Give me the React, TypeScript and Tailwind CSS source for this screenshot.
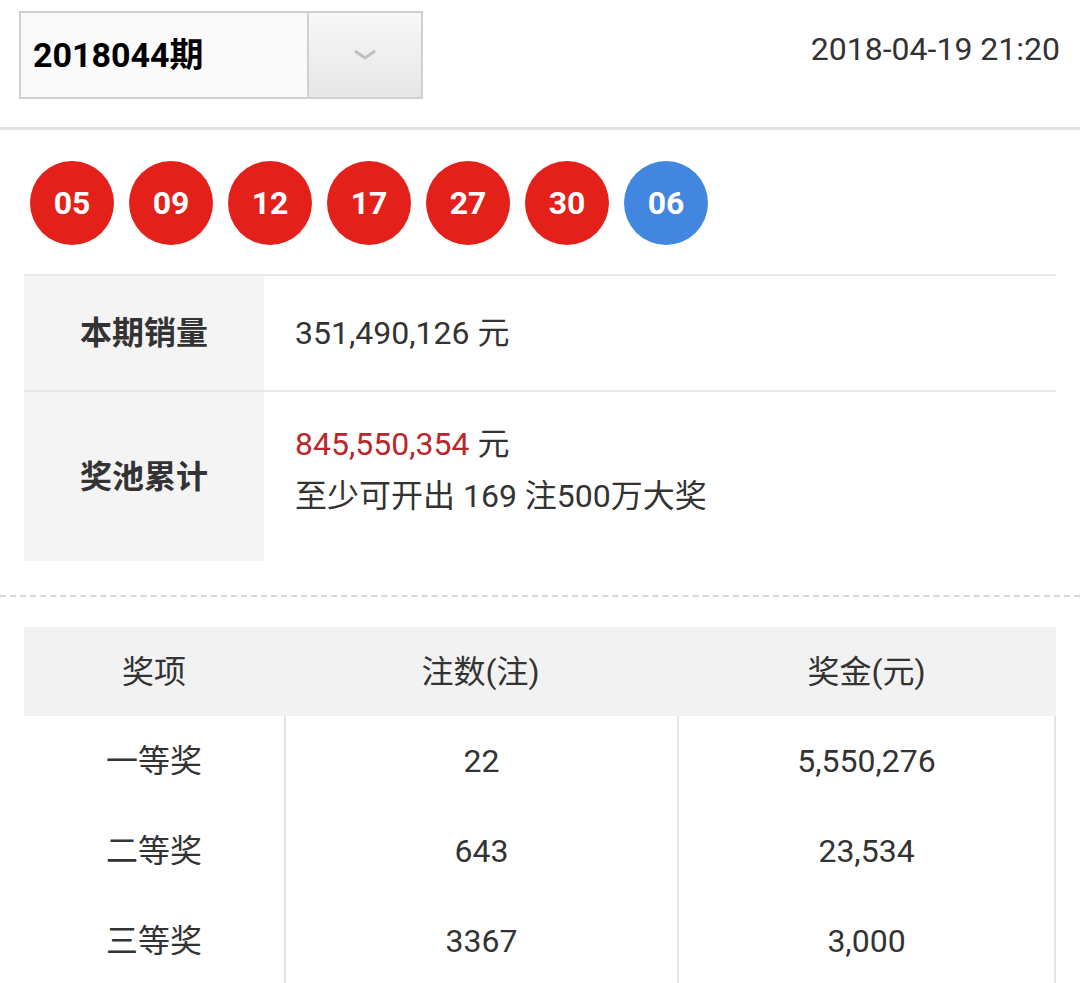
const font = { fontFamily: 'Roboto, "Noto Sans CJK SC", sans-serif' };

const balls = ["05", "09", "12", "17", "27", "30"];
const rows = [
  ["一等奖", "22", "5,550,276"],
  ["二等奖", "643", "23,534"],
  ["三等奖", "3367", "3,000"],
];

export default function App() {
  return (
    <div className="w-[1080px] h-[983px] overflow-hidden bg-white text-[#333]" style={font}>
      <div className="flex justify-between items-start pl-[19px] pr-[20px] pt-[11px] h-[127px]">
        <div className="flex h-[88px] border-2 border-[#d0d0d0] bg-[#fafafa]">
          <div className="w-[286px] flex items-center pl-[12px] text-[34px] font-bold text-black">2018044期</div>
          <div className="w-[114px] flex items-center justify-center border-l-2 border-[#d0d0d0] bg-gradient-to-b from-[#f8f8f8] to-[#e6e6e6]">
            <svg width="26" height="14" viewBox="0 0 26 14"><path d="M3 3 L13 10 L23 3" fill="none" stroke="#c0c0c0" strokeWidth="3" /></svg>
          </div>
        </div>
        <div className="text-[32px] text-[#333] pt-[14px]">2018-04-19 21:20</div>
      </div>
      <div className="h-[3px] bg-[#e3e3e3]" />
      <div className="flex gap-[15px] pl-[30px] pt-[31px] h-[144px]">
        {balls.map((b) => (
          <div key={b} className="w-[84px] h-[84px] rounded-full bg-[#e3211a] text-white font-bold text-[32px] flex items-center justify-center">{b}</div>
        ))}
        <div className="w-[84px] h-[84px] rounded-full bg-[#4386e0] text-white font-bold text-[32px] flex items-center justify-center">06</div>
      </div>
      <div className="mx-[24px] border-t-2 border-[#e8e8e8]">
        <div className="flex h-[116px] border-b-2 border-[#e8e8e8]">
          <div className="w-[240px] bg-[#f4f4f4] flex items-center justify-center text-[32px] font-bold text-[#333]">本期销量</div>
          <div className="flex items-center pl-[31px] text-[32px]">351,490,126 元</div>
        </div>
        <div className="flex h-[169px]">
          <div className="w-[240px] bg-[#f4f4f4] flex items-center justify-center text-[32px] font-bold text-[#333]">奖池累计</div>
          <div className="flex flex-col justify-center pl-[31px] text-[32px] leading-[52px] pb-[14px]">
            <div><span className="text-[#b8282a]">845,550,354</span> 元</div>
            <div>至少可开出 169 注500万大奖</div>
          </div>
        </div>
      </div>
      <div className="mt-[34px] border-t-2 border-dashed border-[#d8d8d8]" />
      <div className="mx-[24px] mt-[30px] text-[32px]">
        <div className="grid grid-cols-[260px_393px_379px] h-[89px] bg-[#f2f2f2] items-center text-center">
          <div>奖项</div><div>注数(注)</div><div>奖金(元)</div>
        </div>
        {rows.map((r) => (
          <div key={r[0]} className="grid grid-cols-[260px_393px_379px] h-[90px] text-center">
            <div className="flex items-center justify-center">{r[0]}</div>
            <div className="flex items-center justify-center border-l-2 border-[#e5e5e5]">{r[1]}</div>
            <div className="flex items-center justify-center border-l-2 border-r-2 border-[#e5e5e5]">{r[2]}</div>
          </div>
        ))}
      </div>
    </div>
  );
}
